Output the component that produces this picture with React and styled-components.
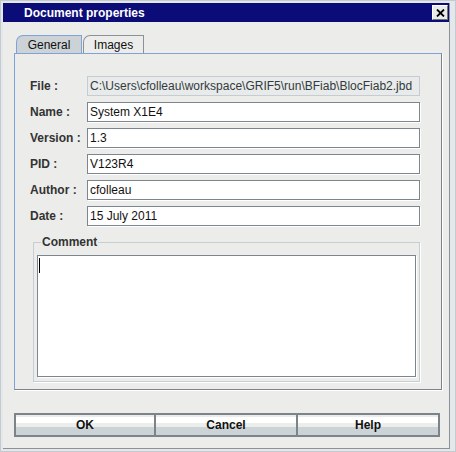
import React from 'react';
import styled, { createGlobalStyle } from 'styled-components';

const GlobalStyle = createGlobalStyle`
    html, body { margin: 0; padding: 0; background: #e4e8ea; }
    body { font-family: "Liberation Sans", Arial, sans-serif; font-size: 12px; }
`;

const Frame = styled.div`
    box-sizing: border-box;
    width: 456px;
    height: 452px;
    border: 1px solid #c4cacd;
    padding: 2px 5px 2px 2px;
    background: #e4e8ea;
`;

const Window = styled.div`
    box-sizing: border-box;
    height: 100%;
    display: flex;
    flex-direction: column;
    background: #ecedea;
    border-right: 1px solid #8a9298;
    border-bottom: 1px solid #8a9298;
`;

const TitleBar = styled.div`
    height: 19px;
    display: flex;
    align-items: center;
    justify-content: space-between;
    background: #0c0c78;
    color: #ffffff;
    font-weight: bold;
    font-size: 12px;
    padding: 0 1px 0 21px;
`;

const CloseButton = styled.div`
    box-sizing: border-box;
    width: 16px;
    height: 15px;
    display: flex;
    align-items: center;
    justify-content: center;
    background: #e8ebea;
    border: 1px solid;
    border-color: #ffffff #6e767c #6e767c #ffffff;
`;

const Body = styled.div`
    flex: 1;
    display: flex;
    flex-direction: column;
    padding: 13px 7px 0 11px;
`;

const TabRow = styled.div`
    display: flex;
    padding-left: 2px;
    height: 18px;
`;

const Tab = styled.div`
    box-sizing: border-box;
    display: flex;
    align-items: center;
    justify-content: center;
    width: ${p => p.width}px;
    height: 18px;
    margin-right: 1px;
    color: #111;
    border: 1px solid ${p => p.active ? '#7fa3d6' : '#8a9298'};
    border-bottom: none;
    border-top-left-radius: 7px;
    background: ${p => p.active ? '#ccd2d6' : '#ecedea'};
    padding-top: 1px;
`;

const Panel = styled.div`
    box-sizing: border-box;
    width: 428px;
    height: 337px;
    display: flex;
    flex-direction: column;
    border: 1px solid;
    border-color: #7fa3d6 #7c848a #7c848a #7fa3d6;
    box-shadow: 1px 1px 0 #ffffff;
    padding: 22px 21px 7px 15px;
`;

const Form = styled.div`
    display: grid;
    grid-template-columns: 57px 1fr;
    grid-auto-rows: 20px;
    row-gap: 6px;
`;

const Label = styled.div`
    display: flex;
    align-items: center;
    font-weight: bold;
    color: #333333;
`;

const Field = styled.div`
    box-sizing: border-box;
    display: flex;
    align-items: center;
    padding: 0 0 0 2px;
    white-space: nowrap;
    overflow: hidden;
    color: ${p => p.disabled ? '#333a40' : '#111111'};
    background: ${p => p.disabled ? '#e8ebea' : '#ffffff'};
    border: 1px solid ${p => p.disabled ? '#c4cdd3' : '#7c868e'};
    box-shadow: ${p => p.disabled ? 'none' : '1px 1px 0 #ffffff'};
`;

const Group = styled.fieldset`
    flex: 1;
    margin: 9px 0 0 3px;
    padding: 6px 3px 4px 3px;
    border: 1px solid #c6ced2;
    box-shadow: 1px 1px 0 #ffffff;
    display: flex;
    flex-direction: column;
    min-width: 0;
`;

const Legend = styled.legend`
    font-weight: bold;
    color: #333333;
    padding: 0 1px;
    margin-left: 4px;
    line-height: 14px;
`;

const TextArea = styled.div`
    box-sizing: border-box;
    height: 122px;
    background: #ffffff;
    border: 1px solid #7c868e;
    box-shadow: 1px 1px 0 #ffffff;
    padding: 2px 0 0 1px;
`;

const Caret = styled.div`
    width: 1px;
    height: 15px;
    background: #000000;
`;

const ButtonRow = styled.div`
    display: grid;
    grid-template-columns: repeat(3, 1fr);
    width: 426px;
    margin-top: 23px;
`;

const Button = styled.div`
    box-sizing: border-box;
    height: 24px;
    display: flex;
    align-items: center;
    justify-content: center;
    font-weight: bold;
    color: #111111;
    border: 2px solid #7c848a;
    margin-left: ${p => p.first ? 0 : -2}px;
    background: linear-gradient(
        to bottom,
        #e9ecea 0%, #e9ecea 12%,
        #ffffff 12%, #ffffff 38%,
        #eceeeb 38%, #eceeeb 62%,
        #ccd3d7 62%, #ccd3d7 100%
    );
`;

const fields = [
    ['File :', 'C:\\Users\\cfolleau\\workspace\\GRIF5\\run\\BFiab\\BlocFiab2.jbd', true],
    ['Name :', 'System X1E4'],
    ['Version :', '1.3'],
    ['PID :', 'V123R4'],
    ['Author :', 'cfolleau'],
    ['Date :', '15 July 2011'],
];

const App = () => {
    return <>
        <GlobalStyle />
        <Frame>
            <Window>
                <TitleBar>
                    <span>Document properties</span>
                    <CloseButton>
                        <svg width="9" height="8" viewBox="0 0 9 8">
                            <path d="M1 0.5 L8 7.5 M8 0.5 L1 7.5" stroke="#000" strokeWidth="1.8" />
                        </svg>
                    </CloseButton>
                </TitleBar>
                <Body>
                    <TabRow>
                        <Tab active width={66}>General</Tab>
                        <Tab width={61}>Images</Tab>
                    </TabRow>
                    <Panel>
                        <Form>
                            {fields.map(([label, value, disabled]) => (
                                <React.Fragment key={label}>
                                    <Label>{label}</Label>
                                    <Field disabled={disabled}>{value}</Field>
                                </React.Fragment>
                            ))}
                        </Form>
                        <Group>
                            <Legend>Comment</Legend>
                            <TextArea><Caret /></TextArea>
                        </Group>
                    </Panel>
                    <ButtonRow>
                        <Button first>OK</Button>
                        <Button>Cancel</Button>
                        <Button>Help</Button>
                    </ButtonRow>
                </Body>
            </Window>
        </Frame>
    </>
};

export default App;
